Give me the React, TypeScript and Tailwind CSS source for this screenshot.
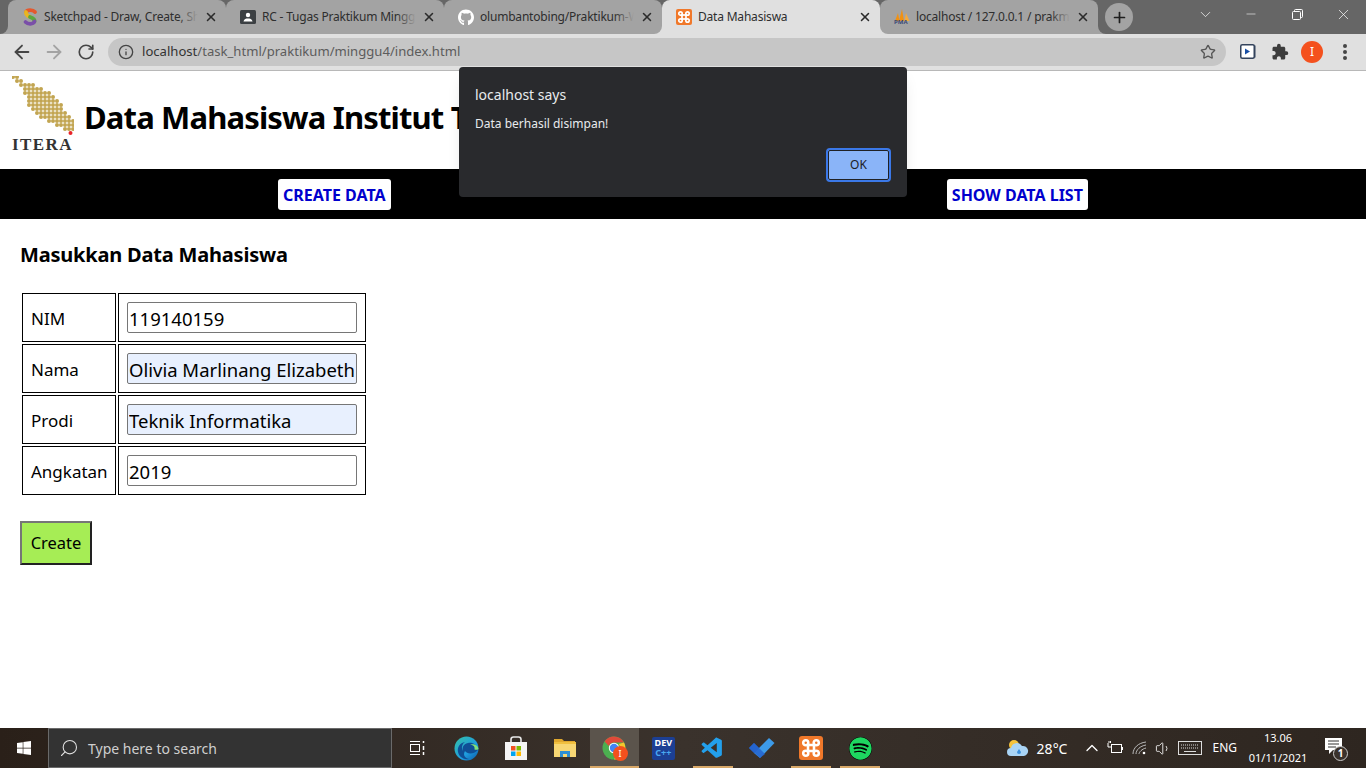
import { ArrowLeft, ArrowRight, RotateCw, Info, Star, X, Plus, ChevronDown, ChevronUp, Minus, Search, Volume1 } from "lucide-react";
import { MdExtension } from "react-icons/md";
import { FaGithub, FaSpotify, FaWindows } from "react-icons/fa";
import { VscVscode } from "react-icons/vsc";

const font = "font-['Noto_Sans','Open_Sans',sans-serif]";

// x from, x to per dot row of the island
const logoRows = [
  [1, 5], [5, 9], [9, 23], [13, 30], [15, 38], [17, 43], [18, 46],
  [18, 48], [21, 51], [26, 53], [28, 56], [38, 60], [45, 60], [52, 60],
];

function ItemFlare({ outer, inner, side }: { outer: string; inner: string; side: "left" | "right" }) {
  return (
    <span className={`absolute bottom-0 size-2 ${side === "left" ? "-left-2" : "-right-2"} ${outer}`}>
      <span className={`block size-2 ${side === "left" ? "rounded-br-lg" : "rounded-bl-lg"} ${inner}`} />
    </span>
  );
}

function SketchpadIcon() {
  return (
    <svg width="16" height="18" viewBox="0 0 16 18" fill="none" strokeWidth="3.8" strokeLinecap="round">
      <path d="M13 4C11 1.5 5 1.5 4 4" stroke="#e5582d" />
      <path d="M4 4C3.5 7 6 8 8 9" stroke="#e8b620" />
      <path d="M8 9C11 10 13 11 12.5 13.5" stroke="#5aa83c" />
      <path d="M12.5 13.5C11 16.5 6 16.5 3.5 14" stroke="#7a4fa8" />
    </svg>
  );
}

function ClassroomIcon() {
  return (
    <svg width="16" height="16" viewBox="0 0 16 16">
      <rect width="16" height="14" y="1" rx="1.5" fill="#3c4043" />
      <circle cx="8" cy="6" r="2.2" fill="#fff" />
      <path d="M3.5 12.5C4 10 6 9.5 8 9.5S12 10 12.5 12.5Z" fill="#fff" />
    </svg>
  );
}

function PmaIcon() {
  return (
    <span className="relative block h-[18px] w-4">
      <svg width="16" height="13" viewBox="0 0 16 13">
        <path d="M1 13L4 5L5.5 13Z" fill="#f29111" />
        <path d="M5 13L8 1L10 13Z" fill="#f29111" />
        <path d="M10.5 13L12 5L15.5 13Z" fill="#f6a93b" />
      </svg>
      <span className="absolute bottom-0 left-0 text-[6px] leading-[7px] font-bold text-[#3b4a78]">PMA</span>
    </span>
  );
}

function XamppIcon({ size }: { size: number }) {
  return (
    <svg width={size} height={size} viewBox="0 0 16 16" fill="none">
      <rect width="16" height="16" rx="2" fill="#f0782a" />
      <g stroke="#fff" strokeWidth="1.7">
        <rect x="6" y="6" width="4" height="4" />
        <circle cx="4.5" cy="4.5" r="1.7" />
        <circle cx="11.5" cy="4.5" r="1.7" />
        <circle cx="4.5" cy="11.5" r="1.7" />
        <circle cx="11.5" cy="11.5" r="1.7" />
      </g>
    </svg>
  );
}

function BrowserTab({ icon, title, className, active, children }: { icon: React.ReactNode; title: string; className?: string; active?: boolean; children?: React.ReactNode }) {
  return (
    <div className={`relative flex h-[34px] w-[218px] shrink-0 items-center rounded-t-lg pl-[14px] ${active ? "z-10 bg-[#e0e0e0]" : "bg-[#a3a3a3]"} ${className ?? ""}`}>
      <span className="flex w-4 shrink-0 justify-center">{icon}</span>
      <span className="relative ml-[6px] w-[154px] overflow-hidden text-xs tracking-[-0.2px] whitespace-nowrap text-[#2e2e2e]">
        {title}
        {!active && <span className="absolute top-0 right-0 h-full w-5 bg-gradient-to-r from-transparent to-[#a3a3a3]" />}
      </span>
      <X size={14} strokeWidth={2.6} className="ml-[6px] shrink-0 text-[#2b2b2b]" />
      {children}
    </div>
  );
}

function Separator() {
  return <span className="absolute top-2 -right-px z-0 h-[19px] w-px bg-[#666666]" />;
}

function LogoItera() {
  return (
    <div className="flex w-[62px] flex-col">
      <svg width="62" height="60" viewBox="0 0 62 60">
        {logoRows.flatMap(([from, to], row) => {
          const dots = [];
          for (let x = 1; x <= 61; x += 4) {
            if (x >= from - 2 && x <= to + 1) {
              dots.push(<circle key={`${row}-${x}`} cx={x} cy={1 + row * 4} r="2" fill="#c2a551" />);
            }
          }
          return dots;
        })}
        <circle cx="58.5" cy="57" r="2" fill="#e8242a" />
      </svg>
      <span className="mt-[1px] font-['Liberation_Serif',serif] text-[17px] leading-[15px] font-bold tracking-[1.4px] text-[#333]">ITERA</span>
    </div>
  );
}

const fields = [
  { label: "NIM", value: "119140159", filled: false },
  { label: "Nama", value: "Olivia Marlinang Elizabeth", filled: true },
  { label: "Prodi", value: "Teknik Informatika", filled: true },
  { label: "Angkatan", value: "2019", filled: false },
];

function EdgeIcon() {
  return (
    <svg width="25" height="25" viewBox="0 0 25 25">
      <defs>
        <linearGradient id="edgeG" x1="0" y1="0" x2="1" y2="1">
          <stop offset="0" stopColor="#35c1a5" />
          <stop offset="0.6" stopColor="#1e9de0" />
          <stop offset="1" stopColor="#0c59a4" />
        </linearGradient>
      </defs>
      <circle cx="12.5" cy="12.5" r="12" fill="url(#edgeG)" />
      <path d="M24 14C23 8 18 6 14 7C9 8 8 12 9 15C7 12 8 8 11 6C6 7 3 11 4 16C5 21 10 24 15 23C10 22 9 18 11 15C13 18 19 19 24 14Z" fill="#0f4f96" />
      <path d="M24.5 13C24 9 20 7.5 16 8.5C20 9 21 11 20.5 13.5C22 14 23.5 14 24.5 13Z" fill="#7fe07a" />
    </svg>
  );
}

function StoreIcon() {
  return (
    <svg width="24" height="25" viewBox="0 0 24 25">
      <path d="M7 6V3.5C7 2 8 1 9.5 1H14.5C16 1 17 2 17 3.5V6" fill="none" stroke="#e8e8e8" strokeWidth="1.6" />
      <path d="M1 6H23V24H1Z" fill="#f4f4f4" />
      <rect x="7" y="10" width="4.5" height="4.5" fill="#f25022" />
      <rect x="12.5" y="10" width="4.5" height="4.5" fill="#7fba00" />
      <rect x="7" y="15.5" width="4.5" height="4.5" fill="#00a4ef" />
      <rect x="12.5" y="15.5" width="4.5" height="4.5" fill="#ffb900" />
    </svg>
  );
}

function ExplorerIcon() {
  return (
    <svg width="22" height="20" viewBox="0 0 22 20">
      <path d="M0 1H8L10 3H21V6H0Z" fill="#e0a82e" />
      <path d="M0 5H22V19H0Z" fill="#f7d774" />
      <path d="M6 13H16V19H13V16H9V19H6Z" fill="#2d8fd5" />
      <rect x="0" y="4" width="22" height="2" fill="#f0c040" />
    </svg>
  );
}

function ChromeIcon() {
  return (
    <svg width="24" height="24" viewBox="0 0 24 24">
      <circle cx="12" cy="12" r="11.5" fill="#4caf50" />
      <path d="M12 .5A11.5 11.5 0 0 1 22 6.5H12A5.5 5.5 0 0 0 6.8 10L2.6 5.4A11.5 11.5 0 0 1 12 .5Z" fill="#e04a3a" />
      <path d="M22 6.5A11.5 11.5 0 0 1 12 23.5L16.8 15A5.5 5.5 0 0 0 16.5 8Z" fill="#f6c62d" />
      <circle cx="12" cy="12" r="5.2" fill="#fff" />
      <circle cx="12" cy="12" r="4.2" fill="#4285f4" />
    </svg>
  );
}

function TodoIcon() {
  return (
    <svg width="26" height="20" viewBox="0 0 26 20">
      <path d="M0 10L5 5L10 10L5 15Z" fill="#2564cf" />
      <path d="M5 15L20 0L25.5 5L11 20Z" fill="#3d9be9" />
      <path d="M5 5L16 16L11 20L0 10Z" fill="#2564cf" opacity="0.85" />
    </svg>
  );
}

function TaskIcon({ children, active, running }: { children: React.ReactNode; active?: boolean; running?: boolean }) {
  return (
    <div className={`relative flex h-10 w-[49.2px] shrink-0 items-center justify-center ${active ? "bg-[#5b544c]" : ""}`}>
      {children}
      {running && <span className={`absolute bottom-0 h-[2px] bg-[#d8a868] ${active ? "inset-x-0" : "inset-x-[4.6px]"}`} />}
    </div>
  );
}

export default function App() {
  return (
    <div className={`relative flex h-screen flex-col overflow-hidden bg-white ${font}`}>
      {/* tab strip */}
      <div className="flex h-[34px] shrink-0 bg-[#666666]">
        <div className="w-2 shrink-0" />
        <BrowserTab icon={<SketchpadIcon />} title="Sketchpad - Draw, Create, Share!">
          <ItemFlare side="left" outer="bg-[#a3a3a3]" inner="bg-[#666666]" />
          <Separator />
        </BrowserTab>
        <BrowserTab icon={<ClassroomIcon />} title="RC - Tugas Praktikum Minggu 4">
          <Separator />
        </BrowserTab>
        <BrowserTab icon={<FaGithub size={17} className="text-white" />} title="olumbantobing/Praktikum-Web" />
        <BrowserTab icon={<XamppIcon size={16} />} title="Data Mahasiswa" active>
          <ItemFlare side="left" outer="bg-[#e0e0e0]" inner="bg-[#a3a3a3]" />
          <ItemFlare side="right" outer="bg-[#e0e0e0]" inner="bg-[#a3a3a3]" />
        </BrowserTab>
        <BrowserTab icon={<PmaIcon />} title="localhost / 127.0.0.1 / prakmweb">
          <ItemFlare side="right" outer="bg-[#a3a3a3]" inner="bg-[#666666]" />
        </BrowserTab>
        <div className="ml-[7px] mt-[3px] flex size-7 items-center justify-center rounded-full bg-[#a3a3a3]">
          <Plus size={17} strokeWidth={2.4} className="text-[#1f1f1f]" />
        </div>
        <div className="ml-auto flex h-7 items-center text-white">
          <span className="flex w-[46px] justify-center"><ChevronDown size={17} strokeWidth={1} /></span>
          <span className="flex w-[46px] justify-center"><Minus size={14} strokeWidth={1} /></span>
          <span className="flex w-[46px] justify-center">
            <svg width="11" height="11" viewBox="0 0 11 11" fill="none" stroke="currentColor">
              <rect x="0.5" y="2.5" width="8" height="8" rx="1" />
              <path d="M2.5 2.5V1.5A1 1 0 0 1 3.5 .5H9.5A1 1 0 0 1 10.5 1.5V7.5A1 1 0 0 1 9.5 8.5H8.5" />
            </svg>
          </span>
          <span className="flex w-[46px] justify-center"><X size={17} strokeWidth={1} /></span>
        </div>
      </div>

      {/* toolbar */}
      <div className="flex h-[37px] shrink-0 items-center border-b border-b-[#b8b8b8] bg-[#e0e0e0] pb-[1px] pl-[11px]">
        <ArrowLeft size={22} strokeWidth={2} className="text-[#454545]" />
        <ArrowRight size={22} strokeWidth={2} className="ml-[10px] text-[#a3a3a3]" />
        <RotateCw size={18} strokeWidth={2.2} className="ml-[12px] text-[#454545]" />
        <div className="ml-[13px] flex h-7 w-[1118px] items-center rounded-full bg-[#c6c6c6] pl-[10px]">
          <Info size={16} strokeWidth={2} className="text-[#454545]" />
          <span className="ml-[8px] text-[13.1px] text-[#333]">
            localhost<span className="text-[#5c5c5c]">/task_html/praktikum/minggu4/index.html</span>
          </span>
          <Star size={16} strokeWidth={2} className="mr-[10px] ml-auto text-[#555]" />
        </div>
        <svg width="16" height="15" viewBox="0 0 16 15" className="ml-[14px]">
          <rect x="0.75" y="0.75" width="13.5" height="13.5" rx="1.5" fill="#fff" stroke="#33435c" strokeWidth="1.5" />
          <path d="M14 1.5H15.5V13.5H14Z" fill="#33435c" />
          <path d="M5 4.5L10 7.5L5 10.5Z" fill="#174ea6" />
        </svg>
        <MdExtension size={18} className="ml-[15px] text-[#3c3c3c]" />
        <span className="ml-[12px] flex size-[22px] items-center justify-center rounded-full bg-[#f4511e] text-xs text-white">I</span>
        <span className="ml-[20px] flex flex-col gap-[2px]">
          <span className="size-1 rounded-full bg-[#454545]" />
          <span className="size-1 rounded-full bg-[#454545]" />
          <span className="size-1 rounded-full bg-[#454545]" />
        </span>
      </div>

      {/* page */}
      <div className="min-h-0 flex-1">
        <header className="flex h-[98px] items-start pl-3 pt-[5px]">
          <LogoItera />
          <h1 className="mt-[19px] ml-[10px] text-[31px] leading-[44px] font-bold tracking-[-0.85px] whitespace-nowrap text-black">Data Mahasiswa Institut Teknologi Sumatera</h1>
        </header>
        <nav className="flex h-[50px] items-center justify-around bg-black">
          <a className="rounded-[3px] bg-white px-[5px] pt-[5px] pb-[3px] text-base leading-[23px] font-bold text-[#0000cd]">CREATE DATA</a>
          <a className="rounded-[3px] bg-white px-[5px] pt-[5px] pb-[3px] text-base leading-[23px] font-bold text-[#0000cd]">SHOW DATA LIST</a>
        </nav>
        <main className="px-5 pt-[22px]">
          <h2 className="text-xl leading-[28px] font-bold tracking-[-0.2px] text-black">Masukkan Data Mahasiswa</h2>
          <table className="mt-[22px] border-separate border-spacing-0.5">
            <tbody>
              {fields.map((f) => (
                <tr key={f.label}>
                  <td className="h-[49px] w-[94px] border border-black pt-[2px] pl-2 text-[17px] text-black">{f.label}</td>
                  <td className="h-[49px] w-[248px] border border-black pl-2">
                    <input
                      readOnly
                      value={f.value}
                      className={`block h-[31px] w-[230px] rounded-[2px] border border-[#767676] pt-[1px] pl-[1px] text-[18.5px] text-black ${f.filled ? "bg-[#e8f0fe]" : "bg-white"}`}
                    />
                  </td>
                </tr>
              ))}
            </tbody>
          </table>
          <button className="mt-6 h-11 w-[72px] border-2 border-t-[#767676] border-r-[#222] border-b-[#222] border-l-[#767676] bg-[#a6ed55] pt-[1px] text-[16.5px] text-black">Create</button>
        </main>
      </div>

      {/* alert dialog */}
      <div className="absolute top-[67px] left-[459px] flex h-[130px] w-[448px] flex-col rounded-[4px] bg-[#292a2d] px-4 pt-[18px] shadow-lg">
        <p className="text-sm leading-5 text-[#e8eaed]">localhost says</p>
        <p className="mt-[10px] text-xs leading-[17px] text-[#e8eaed]">Data berhasil disimpan!</p>
        <button className="mt-[16px] ml-auto h-[34px] w-[65px] rounded-[4px] border-[2px] border-[#3b78e7] bg-[#8ab4f8] text-xs text-[#202124] outline-1 -outline-offset-3 outline-[#202124]">OK</button>
      </div>

      {/* taskbar */}
      <footer className="flex h-10 shrink-0 items-center bg-gradient-to-r from-[#2a2019] via-[#3a322c] to-[#2e2620] text-white">
        <div className="flex w-12 shrink-0 justify-center"><FaWindows size={16} /></div>
        <div className="flex h-10 w-[344px] shrink-0 items-center border border-[#6a6a6a] bg-[#333333] pl-[10px]">
          <Search size={20} strokeWidth={1.3} className="-scale-x-100 text-[#e0e0e0]" />
          <span className="ml-[9px] pt-[2px] text-sm text-[#cfcfcf]">Type here to search</span>
        </div>
        <div className="flex w-[50px] shrink-0 justify-center">
          <svg width="16" height="16" viewBox="0 0 16 16" fill="none" stroke="#fff">
            <path d="M1 1.5H11M1 14.5H11" />
            <rect x="1.5" y="4.5" width="9" height="7" />
            <path d="M14.5 1V3M14.5 6V10M14.5 12V15" strokeWidth="1.5" />
          </svg>
        </div>
        <div className="flex">
          <TaskIcon><EdgeIcon /></TaskIcon>
          <TaskIcon><StoreIcon /></TaskIcon>
          <TaskIcon><ExplorerIcon /></TaskIcon>
          <TaskIcon active running>
            <ChromeIcon />
            <span className="absolute top-[18px] left-[23px] flex size-[15px] items-center justify-center rounded-full bg-[#f4511e] text-[9px] text-white">I</span>
          </TaskIcon>
          <TaskIcon>
            <div className="flex h-[23px] w-[23px] flex-col items-center justify-center rounded-[2px] bg-[#1c3f94] text-[9px] leading-[10px] font-bold">
              <span className="text-white">DEV</span>
              <span className="text-[#4aa8f0]">C++</span>
            </div>
          </TaskIcon>
          <TaskIcon running><VscVscode size={25} className="text-[#23a0ec]" /></TaskIcon>
          <TaskIcon><TodoIcon /></TaskIcon>
          <TaskIcon running><XamppIcon size={24} /></TaskIcon>
          <TaskIcon running><FaSpotify size={23} className="rounded-full bg-black text-[#1ed760]" /></TaskIcon>
        </div>
        <div className="ml-auto flex items-center">
          <svg width="22" height="18" viewBox="0 0 22 18">
            <circle cx="7" cy="6" r="5" fill="#f5c33b" />
            <path d="M4 17A4 4 0 0 1 4 9A6 6 0 0 1 15 7A5 5 0 0 1 17 17Z" fill="#a9d4f5" />
            <path d="M12 10L14 13A2 2 0 1 1 10 13Z" fill="#3a8fdc" />
          </svg>
          <span className="ml-2 pt-[2px] text-sm">28°C</span>
          <ChevronUp size={20} strokeWidth={1.6} className="ml-[15px]" />
          <svg width="16" height="14" viewBox="0 0 16 14" fill="none" stroke="#fff" className="ml-[5px]">
            <rect x="4.5" y="3.5" width="10" height="8" />
            <path d="M15.5 6V9M1 2V6H4M2 0V2M3.5 0V2" />
          </svg>
          <svg width="15" height="14" viewBox="0 0 15 14" fill="none" stroke="#bbb" className="ml-[9px]">
            <path d="M1 13C1 7 6 2 14 1M4 13C4 9 8 5 14 4M7 13C7 11 10 8 14 7" />
            <circle cx="12" cy="12" r="1.3" fill="#fff" stroke="none" />
          </svg>
          <Volume1 size={17} strokeWidth={1.2} className="ml-2" />
          <svg width="24" height="14" viewBox="0 0 24 14" fill="none" stroke="#ddd" className="ml-[6px]">
            <rect x="0.5" y="0.5" width="23" height="13" />
            <path d="M3 4H21M3 7H21" strokeDasharray="1 1" />
            <path d="M6 10.5H18" />
          </svg>
          <span className="ml-[10px] text-xs">ENG</span>
          <div className="ml-[12px] flex w-[58px] flex-col items-center text-[11px] leading-5 whitespace-nowrap">
            <span>13.06</span>
            <span>01/11/2021</span>
          </div>
          <div className="relative ml-[19px] mr-[24px]">
            <svg width="17" height="16" viewBox="0 0 17 16" className="-mt-1 -ml-[1px]">
              <path d="M0 0H17V12H8L4 16V12H0Z" fill="#fff" />
              <path d="M3 3H14M3 6H14M3 9H11" stroke="#333" />
            </svg>
            <span className="absolute top-[4px] left-[7px] flex size-[15px] items-center justify-center rounded-full border border-[#ccc] bg-[#3a322c] text-[10px] font-bold">1</span>
          </div>
        </div>
      </footer>
    </div>
  );
}
